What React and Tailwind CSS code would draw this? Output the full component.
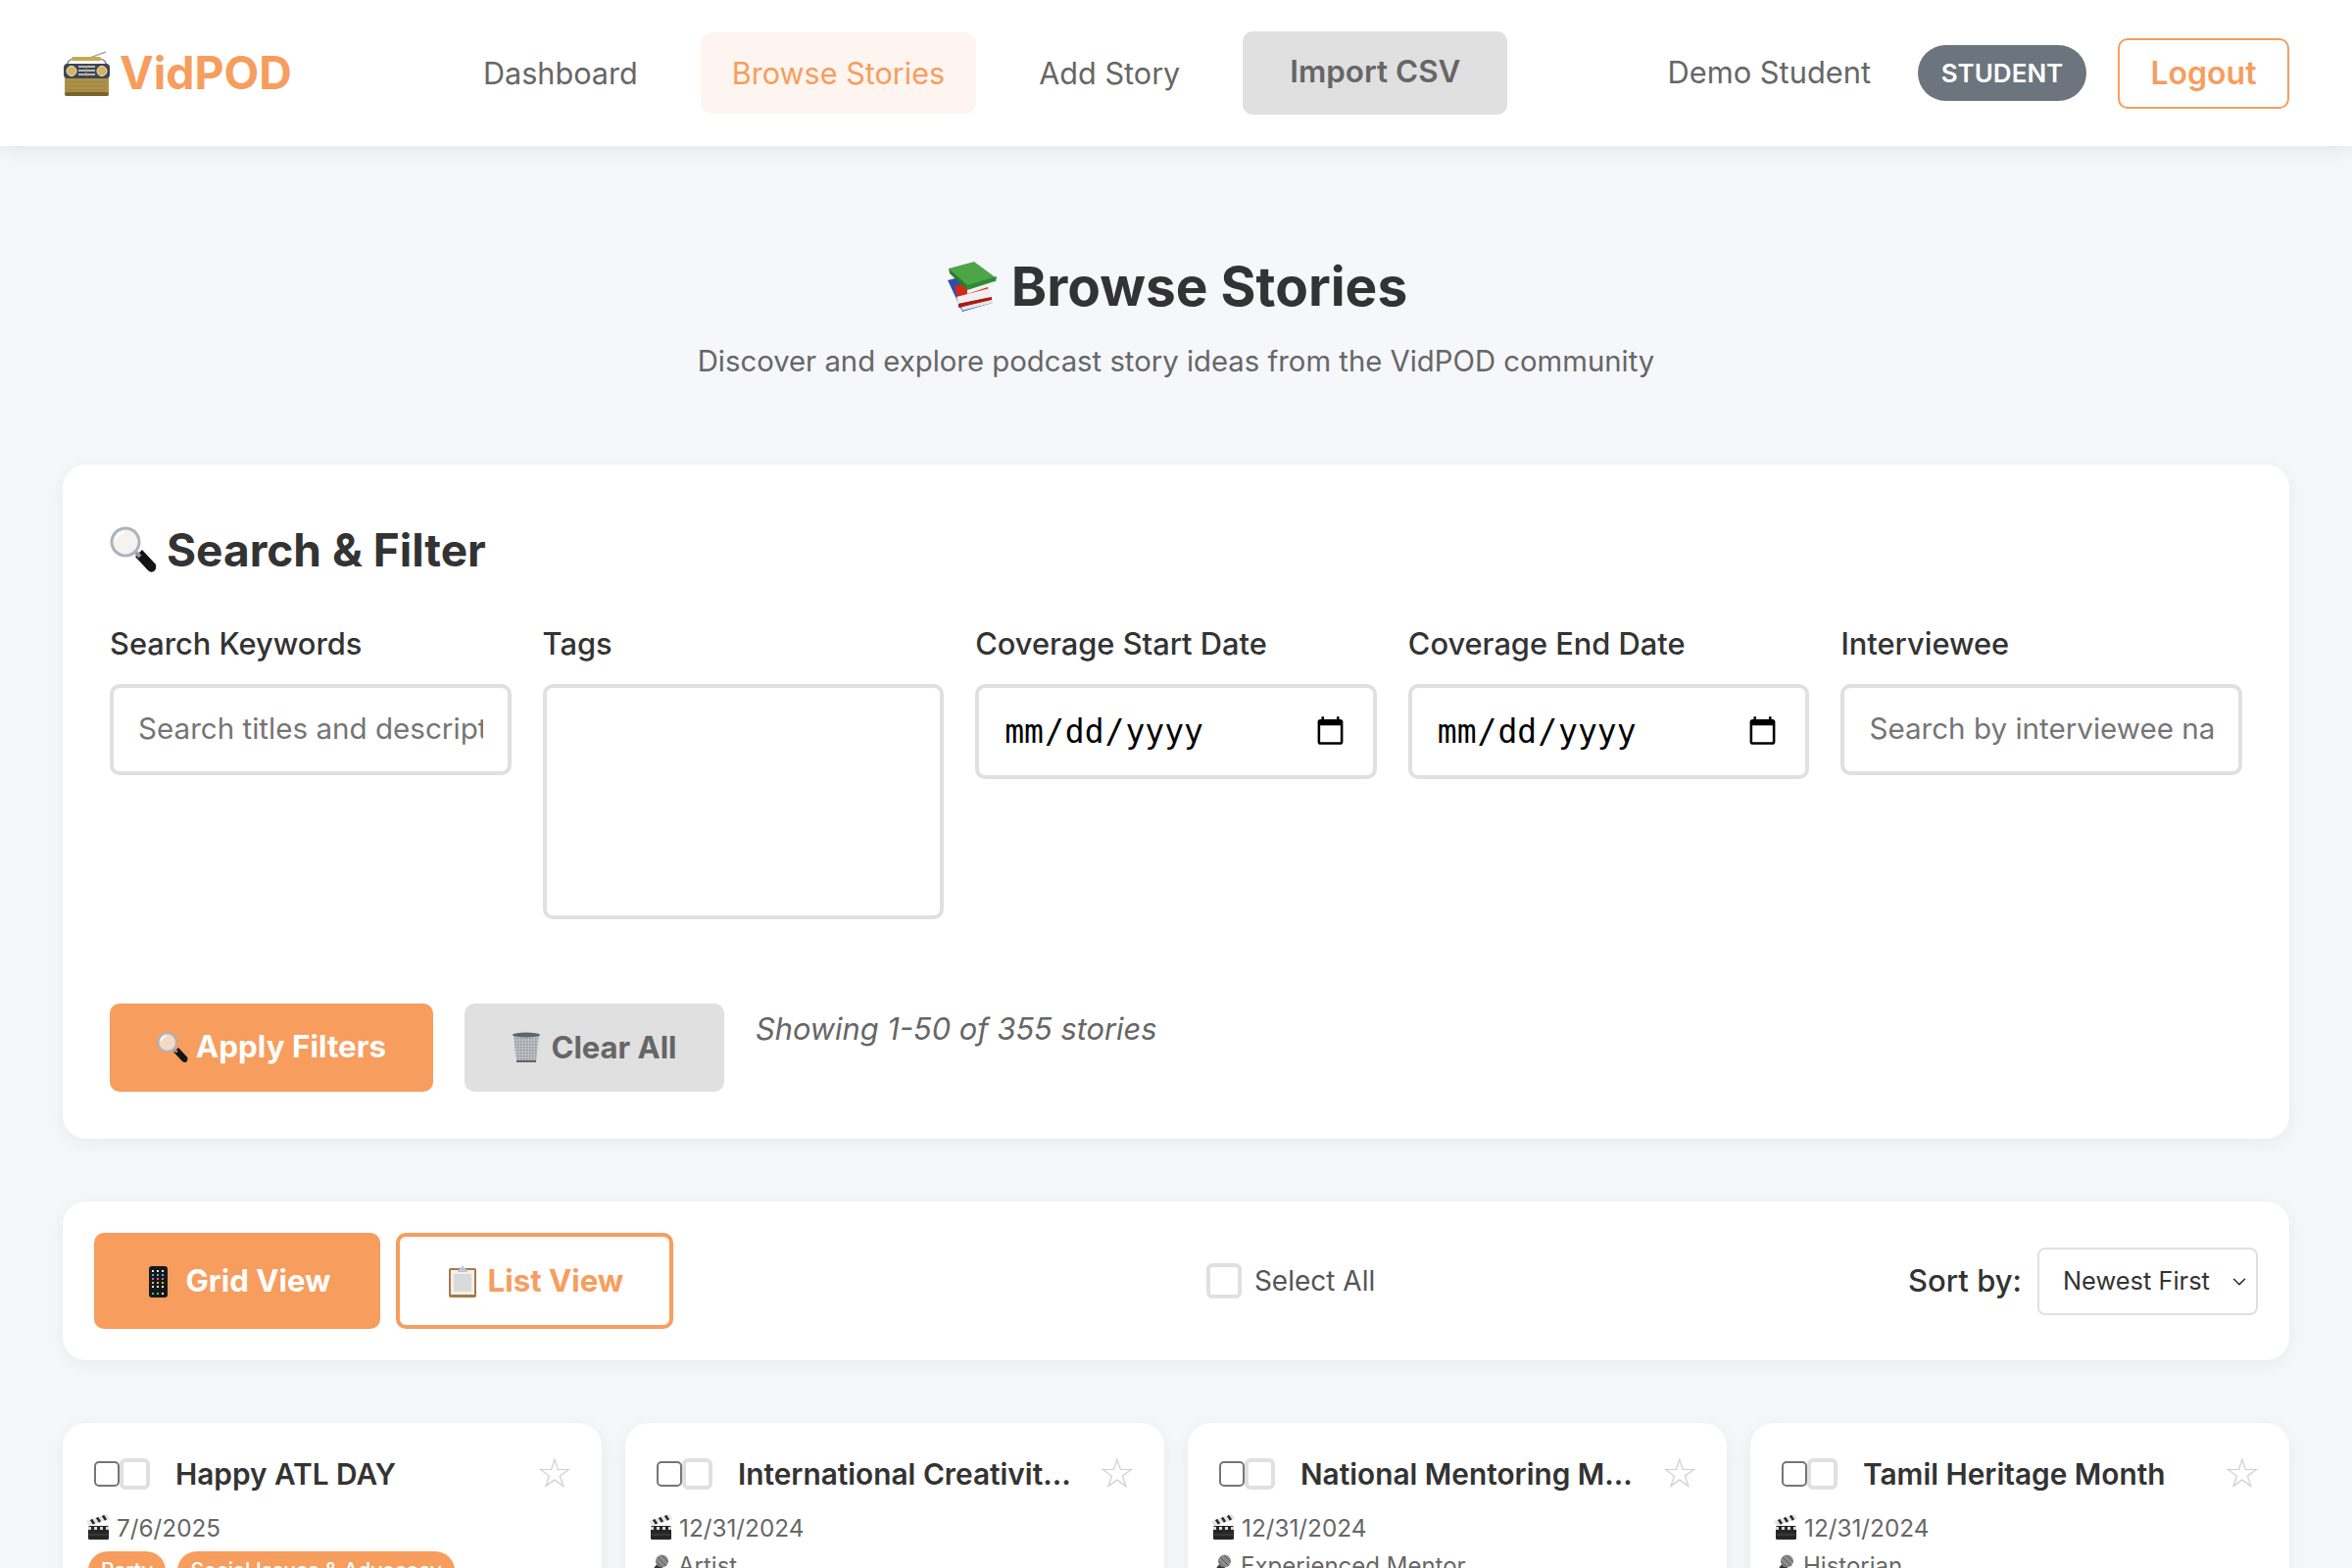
import React from 'react';
import { ChevronDown } from 'lucide-react';

const Radio = () => (
  <svg viewBox="0 0 48 46" className="w-[48px] h-[46px] shrink-0">
    <path d="M22 9 L44 1" stroke="#a9a9a9" strokeWidth="1.5" />
    <path d="M4 18 Q4 8 12 8 L37 8 Q45 8 45 18" fill="none" stroke="#8d8d8d" strokeWidth="1.6" />
    <rect x="9" y="6" width="30" height="4" rx="1.5" fill="#c9a94f" />
    <rect x="2" y="13" width="45" height="33" rx="3" fill="#ab9048" />
    <rect x="2" y="42" width="45" height="4" rx="2" fill="#7a6428" />
    <rect x="1" y="13" width="47" height="15" rx="4" fill="#3f4650" />
    <circle cx="9" cy="20.5" r="5" fill="#d5b565" stroke="#f0e6c0" />
    <circle cx="40" cy="20.5" r="5" fill="#d5b565" stroke="#f0e6c0" />
    <path d="M16 16h17M16 20h17M16 24h17" stroke="#b5b9bf" strokeWidth="2" />
    <path d="M24 15v11" stroke="#c98a4a" strokeWidth="1" />
    <path d="M5 32h39M5 36h39M5 40h39" stroke="#9c8340" strokeWidth="1" />
  </svg>
);

const Books = () => (
  <svg viewBox="0 0 50 51" className="w-[50px] h-[51px] shrink-0">
    <path d="M0 19 L23 13 L46 42 L15 51 Z" fill="#2f4fa8" />
    <path d="M14 46 L46 37 L46 42 L15 50 Z" fill="#e8e8e8" />
    <path d="M7 25 L38 16 L44 36 L12 45 Z" fill="#d3281e" />
    <path d="M9 36 L43 27 L45 36 L11 43 Z" fill="#efefef" />
    <path d="M11 43 L45 36 L45 39 L11 47 Z" fill="#a81c14" />
    <path d="M1 7 L27 0 L50 17 L20 29 Z" fill="#4ea547" />
    <path d="M1 7 L20 24 L20 29 L2 12 Z" fill="#2c7a2c" />
    <path d="M20 24 L50 15 L49 20 L21 30 Z" fill="#2f8a33" />
    <path d="M20 29 L48 20 L47 24 L20 33 Z" fill="#f1f1f1" />
  </svg>
);

const Lens = ({ size = 48 }) => (
  <svg viewBox="0 0 48 48" style={{ width: size, height: size }} className="shrink-0">
    <path d="M26 31 L33 24 L47 39 Q48 44 45 46 Q41 48 38 44 Z" fill="#141414" />
    <path d="M26 26 L31 31" stroke="#9a9a9a" strokeWidth="4" />
    <circle cx="16" cy="16" r="14" fill="#f3efe8" fillOpacity="0.75" stroke="#a9b4bf" strokeWidth="3" />
    <path d="M6 14 Q8 7 15 6" fill="none" stroke="#ffffff" strokeWidth="2" />
  </svg>
);

const Trash = () => (
  <svg viewBox="0 0 30 32" className="w-[30px] h-[32px] shrink-0">
    <defs>
      <pattern id="mesh" width="3" height="3" patternUnits="userSpaceOnUse">
        <rect width="3" height="3" fill="#bcc0c4" />
        <rect width="1.5" height="1.5" fill="#8a9096" />
      </pattern>
    </defs>
    <path d="M2 3 L28 3 L25 31 L5 31 Z" fill="url(#mesh)" />
    <ellipse cx="15" cy="3" rx="14" ry="2.5" fill="#5c666e" />
    <path d="M5 30 L25 30" stroke="#5c666e" strokeWidth="2" />
  </svg>
);

const Phone = () => (
  <svg viewBox="0 0 19 32" className="w-[19px] h-[32px] shrink-0">
    <rect x="0" y="0" width="19" height="32" rx="3" fill="#17181a" />
    <g>
      <path d="M3 5h2M8 5h2M13 5h2" stroke="#e6e6e6" strokeWidth="2" />
      <path d="M3 9h2M8 9h2M13 9h2" stroke="#39b6e6" strokeWidth="2" />
      <path d="M3 13h2M8 13h2M13 13h2" stroke="#e35aa8" strokeWidth="2" />
      <path d="M3 17h2M8 17h2M13 17h2" stroke="#f2b632" strokeWidth="2" />
      <path d="M3 21h2M8 21h2M13 21h2" stroke="#e8e8e8" strokeWidth="2" />
      <path d="M3 28h2M8 28h2" stroke="#3fc86b" strokeWidth="2" />
      <path d="M13 28h2" stroke="#f0f0f0" strokeWidth="2" />
    </g>
  </svg>
);

const Clipboard = () => (
  <svg viewBox="0 0 28 33" className="w-[28px] h-[33px] shrink-0">
    <rect x="0" y="3" width="28" height="30" rx="2" fill="#a47a45" />
    <rect x="2" y="5" width="24" height="25" fill="#f0f0f0" />
    <rect x="5" y="9" width="18" height="18" fill="#dadada" />
    <path d="M9 5 L12 3 L14 0 L16 3 L19 5 L19 7 L9 7 Z" fill="#c0c6cc" />
  </svg>
);

const Clapper = () => (
  <svg viewBox="0 0 24 26" className="w-[24px] h-[26px] shrink-0 -mt-[2px]">
    <path d="M0 7 L21 0 L24 5 L3 12 Z" fill="#e4e4e4" />
    <path d="M5 5.5 L8 10 M11 3.5 L14 8 M17 1.5 L20 6" stroke="#2a2a2a" strokeWidth="2.6" />
    <rect x="2" y="12" width="21" height="14" rx="1.5" fill="#262626" />
    <path d="M2 14.5 L23 14.5" stroke="#d8d8d8" strokeWidth="3" strokeDasharray="3 3" />
    <path d="M3 21h19" stroke="#4a4a4a" strokeWidth="1" />
  </svg>
);

const Mic = () => (
  <svg viewBox="0 0 20 24" className="w-[20px] h-[24px] shrink-0">
    <path d="M0 21 L9 9 L14 13 L4 24 Z" fill="#333" />
    <circle cx="13.5" cy="7" r="6.5" fill="#8c8c8c" />
    <path d="M9 3 L18 12 M7 7 L14 14 M13 1 L20 8" stroke="#5d5d5d" strokeWidth="1" />
  </svg>
);

const Field = ({ label, children }) => (
  <div className="flex flex-col items-stretch">
    <label className="block text-[30.8px] leading-[38px] font-medium text-[#333] mt-[1px] mb-[22px]">{label}</label>
    {children}
  </div>
);

const inputClass =
  'w-full h-[93px] px-[25px] pb-[3px] border-4 border-[#e0e0e0] rounded-[10px] bg-white text-[29.6px] outline-none placeholder:text-[#757575]';
const dateClass =
  "w-full h-[97px] px-[25px] border-4 border-[#e0e0e0] rounded-[10px] bg-white text-[33px] text-black outline-none font-['DejaVu_Sans_Mono',monospace]";

const StoryCard = ({ title, date, role, tags }) => (
  <div className="bg-white rounded-[24px] shadow-[0_4px_20px_rgba(0,0,0,0.06)] h-[400px] pt-[36px] px-[24px]">
    <div className="flex items-center pl-[8px] pr-[11px] h-[32px]">
      <input type="checkbox" className="appearance-none w-[26px] h-[26px] shrink-0 bg-white border-2 border-[#767676] rounded-[5px]" />
      <input type="checkbox" className="appearance-none w-[31px] h-[32px] shrink-0 bg-white border-4 border-[#e0e0e0] rounded-[6px]" />
      <h3 className="ml-[26px] flex-1 min-w-0 whitespace-nowrap text-[29.8px] leading-[40px] font-semibold text-[#333]">{title}</h3>
      <span className="ml-[24px] shrink-0 w-[32px] text-center text-[42px] leading-[32px] text-[#cfcfcf] font-['DejaVu_Sans',sans-serif]">☆</span>
    </div>
    <div className="mt-[23px] flex items-center gap-[7px] h-[32px] text-[24.3px] text-[#666]">
      <Clapper />
      <span>{date}</span>
    </div>
    {role && (
      <div className="mt-[7px] flex items-center gap-[10px] h-[32px] text-[24px] text-[#666]">
        <Mic />
        <span>{role}</span>
      </div>
    )}
    {tags && (
      <div className="mt-[8px] ml-[2px] flex gap-[12px]">
        {tags.map((t) => (
          <span key={t} className="px-[13px] h-[40px] leading-[40px] rounded-full bg-[#f79d5d] text-white text-[21px] font-medium">{t}</span>
        ))}
      </div>
    )}
  </div>
);

export default function App() {
  return (
    <div className="h-[1600px] overflow-hidden bg-[#f5f7fb] font-[Inter,sans-serif] text-[#333]">
      <header className="h-[149px] bg-white shadow-[0_4px_20px_rgba(0,0,0,0.08)] px-[64px] flex items-center justify-between relative">
        <div className="flex items-center gap-[10px]">
          <Radio />
          <span className="text-[46.4px] font-bold text-[#f79d5d] leading-none">VidPOD</span>
        </div>
        <nav className="flex items-center gap-[32px] text-[30.6px]">
          <a className="px-[32px] h-[83px] flex items-center rounded-[12px] text-[#666]">Dashboard</a>
          <a className="px-[32px] h-[83px] flex items-center rounded-[12px] text-[#f79d5d] bg-[#fff5f0]">Browse Stories</a>
          <a className="px-[32px] h-[83px] flex items-center rounded-[12px] text-[#666]">Add Story</a>
          <button className="px-[48px] h-[85px] pb-[2px] rounded-[10px] bg-[#e0e0e0] text-[#666] text-[31.4px] font-semibold">Import CSV</button>
        </nav>
        <div className="flex items-center gap-[32px]">
          <span className="mr-[16px] text-[30.8px] text-[#666]">Demo Student</span>
          <span className="w-[172px] h-[57px] flex items-center justify-center rounded-full bg-[#6c757d] text-white text-[26px] font-semibold">STUDENT</span>
          <button className="w-[175px] h-[72px] border-2 border-[#f79d5d] rounded-[10px] text-[#f79d5d] text-[32px] font-semibold">Logout</button>
        </div>
      </header>

      <main className="px-[64px]">
        <div className="pt-[109px] h-[325px] text-center">
          <h1 className="ml-[3px] flex items-center justify-center gap-[15px] text-[55px] leading-[68px] font-bold text-[#333]">
            <Books />
            Browse Stories
          </h1>
          <p className="mt-[23px] text-[29.3px] leading-[40px] text-[#666]">Discover and explore podcast story ideas from the VidPOD community</p>
        </div>

        <section className="h-[688px] bg-white rounded-[24px] shadow-[0_4px_20px_rgba(0,0,0,0.06)] p-[48px] pt-[59px]">
          <h2 className="flex items-center gap-[10px] text-[46px] leading-[56px] font-bold text-[#333]">
            <Lens />
            Search &amp; Filter
          </h2>
          <div className="mt-[48px] grid grid-cols-5 gap-[32px] h-[327px]">
            <Field label="Search Keywords">
              <input className={inputClass} placeholder="Search titles and descriptions..." />
            </Field>
            <Field label="Tags">
              <div className="h-[240px] border-4 border-[#e0e0e0] rounded-[10px]" />
            </Field>
            <Field label="Coverage Start Date">
              <input type="date" className={dateClass} />
            </Field>
            <Field label="Coverage End Date">
              <input type="date" className={dateClass} />
            </Field>
            <Field label="Interviewee">
              <input className={inputClass} placeholder="Search by interviewee name..." />
            </Field>
          </div>
          <div className="mt-[60px] flex items-start gap-[32px]">
            <button className="h-[90px] w-[330px] flex items-center justify-center gap-[8px] rounded-[10px] bg-[#f79d5d] text-white text-[31.4px] font-bold">
              <Lens size={32} />
              Apply Filters
            </button>
            <button className="h-[90px] w-[265px] flex items-center justify-center gap-[10px] rounded-[10px] bg-[#e0e0e0] text-[#666] text-[31px] font-bold">
              <Trash />
              Clear All
            </button>
            <span className="text-[30.8px] italic text-[#666] leading-[52px]">Showing 1-50 of 355 stories</span>
          </div>
        </section>

        <section className="mt-[64px] h-[162px] bg-white rounded-[24px] shadow-[0_4px_20px_rgba(0,0,0,0.06)] px-[32px] flex items-center justify-between">
          <div className="flex gap-[16px]">
            <button className="h-[98px] w-[292px] pl-[6px] pt-[1px] flex items-center justify-center gap-[18px] rounded-[10px] bg-[#f79d5d] text-white text-[31.2px] font-bold">
              <Phone />
              Grid View
            </button>
            <button className="h-[98px] w-[283px] pl-[3px] pt-[1px] flex items-center justify-center gap-[12px] rounded-[10px] border-4 border-[#f79d5d] text-[#f79d5d] text-[31.2px] font-bold">
              <Clipboard />
              List View
            </button>
          </div>
          <label className="flex items-center gap-[13px] text-[28px] text-[#555]">
            <input type="checkbox" className="appearance-none w-[36px] h-[36px] bg-white border-4 border-[#e0e0e0] rounded-[6px]" />
            Select All
          </label>
          <div className="flex items-center gap-[16px]">
            <span className="text-[31px] font-medium text-[#333]">Sort by:</span>
            <div className="relative">
              <select className="appearance-none block w-[225px] h-[69px] pl-[24px] border-2 border-[#e0e0e0] rounded-[8px] bg-white text-[25.4px] text-[#333] outline-none">
                <option>Newest First</option>
              </select>
              <ChevronDown className="absolute right-[8px] top-[24px] w-[22px] h-[22px] text-[#333] pointer-events-none" strokeWidth={1.75} />
            </div>
          </div>
        </section>

        <div className="mt-[64px] grid grid-cols-4 gap-[24px]">
          <StoryCard title="Happy ATL DAY" date="7/6/2025" tags={['Party', 'Social Issues & Advocacy']} />
          <StoryCard title="International Creativit..." date="12/31/2024" role="Artist" />
          <StoryCard title="National Mentoring M..." date="12/31/2024" role="Experienced Mentor" />
          <StoryCard title="Tamil Heritage Month" date="12/31/2024" role="Historian" />
        </div>
      </main>
    </div>
  );
}
